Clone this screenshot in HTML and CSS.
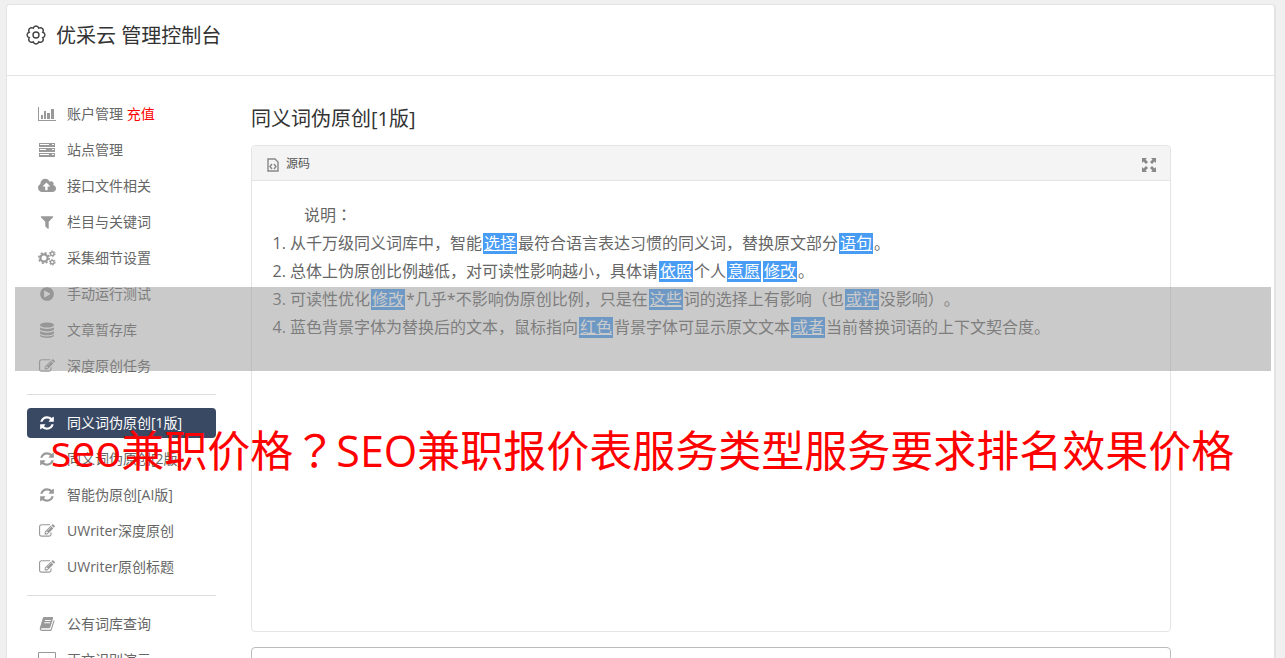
FILE: index.html
```
<!DOCTYPE html>
<html lang="zh-CN">
<head>
    <meta charset="UTF-8">
    <meta name="viewport" content="width=device-width, initial-scale=1.0">
    <title>优采云 管理控制台</title>
    <link rel="stylesheet" href="styles.css">
</head>
<body>
    <!-- 图标 -->
    <svg class="icon-defs" aria-hidden="true">
        <symbol id="i-chart" viewBox="0 0 18 14"><path d="M0 0h1v13h17v1H0zM3 8h2v4H3zM6 4h2v8H6zM9 6h3v6H9zM13 2h3v10h-3z"/></symbol>
        <symbol id="i-server" viewBox="0 0 18 14"><path fill-rule="evenodd" d="M1 0h16v4H1zM2 1v1h9V1zM14 1v1h2V1zM1 5h16v4H1zM2 6v1h6V6zM14 6v1h2V6zM1 10h16v4H1zM2 11v1h9v-1zM14 11v1h2v-1z"/></symbol>
        <symbol id="i-cloud" viewBox="0 128 1920 1536"><path d="M1280 928q0-14-9-23l-352-352q-9-9-23-9t-23 9l-351 351q-10 12-10 24 0 14 9 23t23 9h224v352q0 13 9.5 22.5t22.5 9.5h192q13 0 22.5-9.5t9.5-22.5v-352h224q13 0 22.5-9.5t9.5-22.5zM1920 1152q0 159-112.5 271.5t-271.5 112.5h-1088q-185 0-316.5-131.5t-131.5-316.5q0-130 70-240t188-165q-2-30-2-43 0-212 150-362t362-150q156 0 285.5 87t188.5 231q71-62 166-62 106 0 181 75t75 181q0 76-41 138 130 31 213.5 135.5t83.5 238.5z"/></symbol>
        <symbol id="i-filter" viewBox="0 0 1792 1792"><path d="M1595 295q17 41-14 70l-493 493v742q0 42-39 59-13 5-25 5-27 0-45-19l-256-256q-19-19-19-45v-486l-493-493q-31-29-14-70 17-39 59-39h1280q42 0 59 39z"/></symbol>
        <symbol id="i-cogs" viewBox="0 0 18 16">
            <g fill="none" stroke="currentColor">
                <circle cx="6" cy="8" r="3.6" stroke-width="2.2"/>
                <circle cx="6" cy="8" r="5.2" stroke-width="1.6" stroke-dasharray="2.04 2.04"/>
                <circle cx="14.3" cy="3.8" r="1.8" stroke-width="1.4"/>
                <circle cx="14.3" cy="3.8" r="2.9" stroke-width="1" stroke-dasharray="1.52 1.52"/>
                <circle cx="14.3" cy="12.2" r="1.8" stroke-width="1.4"/>
                <circle cx="14.3" cy="12.2" r="2.9" stroke-width="1" stroke-dasharray="1.52 1.52"/>
            </g>
        </symbol>
        <symbol id="i-play" viewBox="0 0 1792 1792"><path d="M896 128q209 0 385.5 103t279.5 279.5 103 385.5-103 385.5-279.5 279.5-385.5 103-385.5-103-279.5-279.5-103-385.5 103-385.5 279.5-279.5 385.5-103zM1216 951q32-18 32-55t-32-55l-544-320q-31-19-64-1-32 19-32 56v640q0 37 32 56 16 8 32 8 17 0 32-9z"/></symbol>
        <symbol id="i-database" viewBox="0 0 14 16"><path d="M0 3c0-3.400 14-3.400 14 0s-14 3.400-14 0zM0 5.200c2.500 2.300 11.500 2.300 14 0v1.800c0 3.200-14 3.200-14 0zM0 9.100c2.500 2.300 11.500 2.300 14 0v1.800c0 3.200-14 3.200-14 0zM0 12.800c2.500 2.300 11.500 2.300 14 0v0.800c0 3.200-14 3.200-14 0z"/></symbol>
        <symbol id="i-edit" viewBox="0 0 1792 1792"><path d="M888 1184l116-116-152-152-116 116v56h96v96h56zM1328 464q-16-16-33 1l-350 350q-17 17-1 33t33-1l350-350q17-17 1-33zM1408 1058v190q0 119-84.5 203.500t-203.500 84.500h-832q-119 0-203.500-84.500t-84.500-203.500v-832q0-119 84.500-203.500t203.500-84.500h832q63 0 117 25 15 7 18 23 3 17-9 29l-49 49q-14 14-32 8-23-6-45-6h-832q-66 0-113 47t-47 113v832q0 66 47 113t113 47h832q66 0 113-47t47-113v-126q0-13 9-22l64-64q15-15 35-7t20 29zM1312 320l288 288-672 672h-288v-288zM1756 452l-92 92-288-288 92-92q28-28 68-28t68 28l152 152q28 28 28 68t-28 68z"/></symbol>
        <symbol id="i-refresh" viewBox="0 0 1792 1792"><path d="M1639 1056q0 5-1 7-64 268-268 434.500t-478 166.500q-146 0-282.500-55t-243.500-157l-129 129q-19 19-45 19t-45-19-19-45v-448q0-26 19-45t45-19h448q26 0 45 19t19 45-19 45l-137 137q71 66 161 102t187 36q134 0 250-65t186-179q11-17 53-117 8-23 30-23h192q13 0 22.500 9.500t9.500 22.500zM1664 256v448q0 26-19 45t-45 19h-448q-26 0-45-19t-19-45 19-45l138-138q-148-137-349-137-134 0-250 65t-186 179q-11 17-53 117-8 23-30 23h-199q-13 0-22.500-9.500t-9.500-22.500v-7q65-268 270-434.500t480-166.500q146 0 284 55.500t245 156.500l130-129q19-19 45-19t45 19 19 45z"/></symbol>
        <symbol id="i-book" viewBox="0 0 16 16"><path fill-rule="evenodd" d="M5.500 1H13c1 0 1.300.7 1 1.600l-2.600 8.400c-.3.900-.8 1.300-1.700 1.300H2.600c-.8 0-.8 1.400.2 1.400h8c.6 0 .9-.3 1.100-.9L14.700 4c.9.300.9 1 .6 1.800l-2.500 7.700c-.3 1-1 1.500-2 1.500H3c-1.600 0-2.700-1.500-2.200-2.900L3.700 2.400C4 1.500 4.500 1 5.500 1zM6.200 4l-.3.900h5.700l.3-.9zM5.500 6.300l-.3.900h5.700l.3-.9z"/></symbol>
        <symbol id="i-desktop" viewBox="0 0 18 16"><path fill-rule="evenodd" d="M1 0h16q1 0 1 1v11q0 1-1 1h-5l1 3H5l1-3H1q-1 0-1-1V1q0-1 1-1zM1 1v9h16V1z"/></symbol>
    </svg>

    <div class="panel">
        <header class="panel-header">
            <svg class="gear" viewBox="0 0 20 20" aria-hidden="true">
                <path d="M16.800 7.200A2.900 2.900 0 0 1 16.800 12.800A2.900 2.900 0 0 1 12.800 16.800A2.900 2.900 0 0 1 7.200 16.800A2.900 2.900 0 0 1 3.200 12.800A2.900 2.900 0 0 1 3.200 7.200A2.900 2.900 0 0 1 7.200 3.200A2.900 2.900 0 0 1 12.800 3.200A2.900 2.900 0 0 1 16.800 7.200z"/>
                <circle cx="10" cy="10" r="3"/>
            </svg>
            <h1>优采云 管理控制台</h1>
        </header>

        <div class="panel-body">
            <!-- 左侧菜单 -->
            <nav class="sidebar">
                <ul class="menu">
                    <li><a href="#"><svg><use href="#i-chart"/></svg><span>账户管理 <em>充值</em></span></a></li>
                    <li><a href="#"><svg><use href="#i-server"/></svg>站点管理</a></li>
                    <li><a href="#"><svg><use href="#i-cloud"/></svg>接口文件相关</a></li>
                    <li><a href="#"><svg><use href="#i-filter"/></svg>栏目与关键词</a></li>
                    <li><a href="#"><svg><use href="#i-cogs"/></svg>采集细节设置</a></li>
                    <li><a href="#"><svg><use href="#i-play"/></svg>手动运行测试</a></li>
                    <li><a href="#"><svg><use href="#i-database"/></svg>文章暂存库</a></li>
                    <li><a href="#"><svg><use href="#i-edit"/></svg>深度原创任务</a></li>
                </ul>
                <ul class="menu">
                    <li><a href="#" class="active"><svg><use href="#i-refresh"/></svg>同义词伪原创[1版]</a></li>
                    <li><a href="#"><svg><use href="#i-refresh"/></svg>同义词伪原创[2版]</a></li>
                    <li><a href="#"><svg><use href="#i-refresh"/></svg>智能伪原创[AI版]</a></li>
                    <li><a href="#"><svg><use href="#i-edit"/></svg>UWriter深度原创</a></li>
                    <li><a href="#"><svg><use href="#i-edit"/></svg>UWriter原创标题</a></li>
                </ul>
                <ul class="menu">
                    <li><a href="#"><svg><use href="#i-book"/></svg>公有词库查询</a></li>
                    <li><a href="#"><svg><use href="#i-desktop"/></svg>正文识别演示</a></li>
                </ul>
            </nav>

            <!-- 编辑区 -->
            <main class="content">
                <h2>同义词伪原创[1版]</h2>
                <div class="editor">
                    <div class="toolbar">
                        <button type="button" class="tool">
                            <svg class="source-icon" viewBox="0 0 14 14" aria-hidden="true"><path d="M2 1h7l3 3v9H2z"/><path d="M6 6L4 8.500 6 11M8 6l2 2.500L8 11"/></svg>
                            源码
                        </button>
                        <button type="button" class="tool" aria-label="全屏">
                            <svg class="full-icon" viewBox="0 0 14 14" aria-hidden="true"><path d="M0 0h5L3.500 1.500 6 4 4 6 1.500 3.500 0 5zM14 0v5l-1.500-1.500L10 6 8 4l2.500-2.500L9 0zM0 14V9l1.500 1.500L4 8l2 2-2.500 2.500L5 14zM14 14H9l1.500-1.500L8 10l2-2 2.500 2.500L14 9z"/></svg>
                        </button>
                    </div>
                    <div class="editor-body">
                        <p>说明<span class="punct" lang="zh-TW">：</span></p>
                        <ol>
                            <li>从千万级同义词库中，智能<mark>选择</mark>最符合语言表达习惯的同义词，替换原文部分<mark>语句</mark>。</li>
                            <li>总体上伪原创比例越低，对可读性影响越小，具体请<mark>依照</mark>个人<mark>意愿</mark><mark>修改</mark>。</li>
                            <li>可读性优化<mark>修改</mark>*几乎*不影响伪原创比例，只是在<mark>这些</mark>词的选择上有影响（也<mark>或许</mark>没影响）。</li>
                            <li>蓝色背景字体为替换后的文本，鼠标指向<mark>红色</mark>背景字体可显示原文文本<mark>或者</mark>当前替换词语的上下文契合度。</li>
                        </ol>
                    </div>
                </div>
                <textarea class="source-text" aria-label="原文"></textarea>
            </main>
        </div>
    </div>

    <!-- 浮层标题 -->
    <div class="band"></div>
    <div class="banner-title">seo兼职价格<span class="punct" lang="zh-TW">？</span>SEO兼职报价表服务类型服务要求排名效果价格</div>
</body>
</html>
```
FILE: styles.css
```
* {
    box-sizing: border-box;
}
body {
    margin: 0;
    padding: 4px 9px 0 6px;
    height: 100vh;
    overflow: hidden;
    position: relative;
    background-color: #f0f0f0;
    font-family: "Open Sans", "Noto Sans CJK SC", sans-serif;
    font-size: 14px;
    color: #666;
    text-spacing-trim: space-all;
}
.icon-defs {
    display: none;
}
h1, h2 {
    margin: 0;
    font-size: 20px;
    line-height: 30px;
    font-weight: normal;
    color: #333;
}
/* 居中标点 */
.punct {
    font-family: "Noto Sans CJK TC", sans-serif;
    line-height: 1;
}

/* 外层面板 */
.panel {
    background-color: #fff;
    border: 1px solid #e4e4e4;
    border-right-width: 2px;
    border-radius: 4px;
}
.panel-header {
    display: flex;
    align-items: center;
    gap: 10px;
    padding: 16px 19px 24px;
    border-bottom: 1px solid #e4e4e4;
}
.gear {
    width: 20px;
    height: 20px;
    margin-bottom: 2px;
    fill: none;
    stroke: #444;
    stroke-width: 1.4;
}
.panel-body {
    display: flex;
    gap: 35px;
    padding: 23px 20px;
}

/* 左侧菜单 */
.sidebar {
    flex: 0 0 189px;
}
.menu {
    list-style: none;
    margin: 0;
    padding: 0;
    display: flex;
    flex-direction: column;
    gap: 6px;
}
.menu + .menu {
    margin-top: 13px;
    padding-top: 13px;
    border-top: 1px solid #ddd;
}
.menu a {
    display: flex;
    align-items: center;
    gap: 11px;
    height: 30px;
    padding: 0 11px 2px;
    border-radius: 4px;
    color: #666;
    text-decoration: none;
    white-space: nowrap;
}
.menu svg {
    width: 18px;
    height: 16px;
    margin-top: 2px;
    flex: none;
    color: #999;
    fill: currentColor;
}
.menu em {
    font-style: normal;
    color: #f00;
}
.menu .active {
    background-color: #394963;
    color: #fff;
}
.menu .active svg {
    color: #fff;
}

/* 编辑区 */
.content {
    flex: 1;
    max-width: 920px;
    padding-top: 5px;
}
.editor {
    margin: 11px 0 15px;
    border: 1px solid #e4e4e4;
    border-radius: 4px;
}
.toolbar {
    display: flex;
    justify-content: space-between;
    align-items: center;
    height: 35px;
    padding: 0 14px;
    background-color: #f4f4f4;
    border-bottom: 1px solid #e4e4e4;
    border-radius: 4px 4px 0 0;
}
.tool {
    display: flex;
    align-items: center;
    gap: 6px;
    padding: 0;
    border: none;
    background: none;
    font-family: inherit;
    font-size: 12px;
    color: #555;
}
.tool svg {
    width: 14px;
    height: 14px;
    margin-top: 3px;
}
.source-icon {
    fill: none;
    stroke: #888;
    stroke-width: 1.4;
}
.full-icon {
    fill: #888;
}
.editor-body {
    min-height: 450px;
    padding: 20px;
    font-size: 16px;
    line-height: 28px;
}
.editor-body p {
    margin: 0;
    text-indent: 2em;
}
.editor-body ol {
    margin: 0;
    padding-left: 18px;
}
mark {
    margin: 0 1px;
    padding: 0 1px;
    background: linear-gradient(#489cf4, #489cf4) center / 100% 21px no-repeat;
    color: #fff;
    text-decoration: underline;
}
.source-text {
    display: block;
    width: 100%;
    height: 120px;
    border: 1px solid #bbb;
    border-radius: 4px;
    resize: none;
}

/* 浮层标题 */
.band {
    position: absolute;
    top: 287px;
    left: 15px;
    right: 14px;
    height: 84px;
    background-color: rgba(150, 150, 150, 0.5);
}
.banner-title {
    position: absolute;
    top: 419px;
    left: 0;
    right: 0;
    text-align: center;
    font-size: 43px;
    line-height: 64px;
    color: #f00;
    white-space: nowrap;
}
```
